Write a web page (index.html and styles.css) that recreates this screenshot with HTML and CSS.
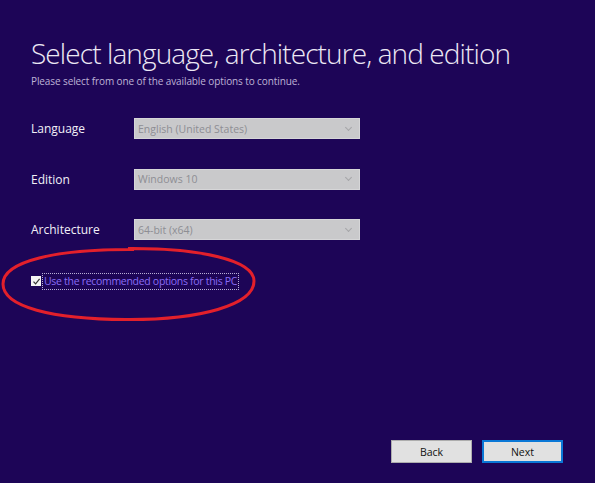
FILE: index.html
```html
<!DOCTYPE html>
<html>
<head>
    <meta charset="utf-8" />
    <title>Windows 10 Setup</title>
    <link rel="stylesheet" href="styles.css">
</head>
<body>
    <div id="page">
        <h1 id="title">Select language, architecture, and edition</h1>
        <p id="subtitle">Please select from one of the available options to continue.</p>

        <div id="options">
            <div class="row">
                <span class="label">Language</span>
                <div class="select"><span>English (United States)</span><span class="chevron"></span></div>
            </div>
            <div class="row">
                <span class="label">Edition</span>
                <div class="select"><span>Windows 10</span><span class="chevron"></span></div>
            </div>
            <div class="row">
                <span class="label">Architecture</span>
                <div class="select"><span>64-bit (x64)</span><span class="chevron"></span></div>
            </div>
        </div>

        <div id="recommended">
            <span class="checkbox">
                <svg width="9" height="9" viewBox="0 0 9 9"><path d="M1.5 4.6 L3.6 6.8 L7.6 1.8" fill="none" stroke="#333" stroke-width="1.2"/></svg>
            </span>
            <span class="check-text">Use the recommended options for this PC</span>
            <svg class="circle" width="260" height="80" viewBox="0 0 260 80">
                <path d="M128 3.5 C200 3 254 15 254 36 C254 60 200 75 126 74.5 C52 74 3 62 3 39 C3 16 56 4 134 4.5" fill="none" stroke="#e3202b" stroke-width="3"/>
            </svg>
        </div>

        <div id="footer">
            <button class="btn">Back</button>
            <button class="btn primary">Next</button>
        </div>
    </div>
</body>
</html>
```

FILE: styles.css
```css
html, body{
    margin: 0;
    height: 100%;
}
body{
    background-color: #1d0557;
    font-family: 'Open Sans', sans-serif;
    color: #ffffff;
}
#page{
    height: 483px;
    padding-left: 31px;
    box-sizing: border-box;
    display: flex;
    flex-direction: column;
}
#title{
    margin: 35px 0 0 0;
    font-size: 28px;
    font-weight: 300;
    line-height: 36px;
    letter-spacing: -0.9px;
    color: #ece8f4;
}
#subtitle{
    margin: 4px 0 0 0;
    font-size: 10px;
    line-height: 12px;
    color: #bdb3d6;
    letter-spacing: -0.1px;
}
#options{
    margin-top: 31px;
    display: flex;
    flex-direction: column;
    gap: 29.5px;
}
.row{
    display: flex;
    align-items: center;
    height: 21px;
}
.label{
    width: 103px;
    font-size: 12px;
    color: #f2f0f7;
}
.select{
    width: 226px;
    height: 21px;
    box-sizing: border-box;
    background-color: #c9c9cb;
    border: 1px solid #d6d6d8;
    display: flex;
    align-items: center;
    justify-content: space-between;
    padding: 0 8px 0 3px;
    font-size: 10.5px;
    color: #8e8e94;
}
.chevron{
    width: 4px;
    height: 4px;
    border-right: 1px solid #a5a5a8;
    border-bottom: 1px solid #a5a5a8;
    transform: rotate(45deg);
    margin-top: -3px;
}
#recommended{
    position: relative;
    margin-top: 35px;
    display: flex;
    align-items: center;
    height: 12px;
}
.checkbox{
    width: 10px;
    height: 10px;
    background-color: #f4f4f4;
    display: flex;
    align-items: center;
    justify-content: center;
}
.check-text{
    margin-left: 2px;
    padding: 1px 1px;
    font-size: 10.5px;
    line-height: 13px;
    color: #8b6cf5;
    outline: 1px dotted #b9b0d8;
    letter-spacing: -0.3px;
}
.circle{
    position: absolute;
    left: -31px;
    top: -30px;
}
#footer{
    margin-top: auto;
    margin-bottom: 20px;
    display: flex;
    justify-content: flex-end;
    gap: 10px;
    padding-right: 32px;
}
.btn{
    width: 81px;
    height: 23px;
    box-sizing: border-box;
    background-color: #e1e1e1;
    border: 1px solid #adadad;
    font-family: 'Open Sans', sans-serif;
    font-size: 10.5px;
    color: #111111;
    padding: 0;
}
.primary{
    border: 2px solid #0a78d6;
}
```
